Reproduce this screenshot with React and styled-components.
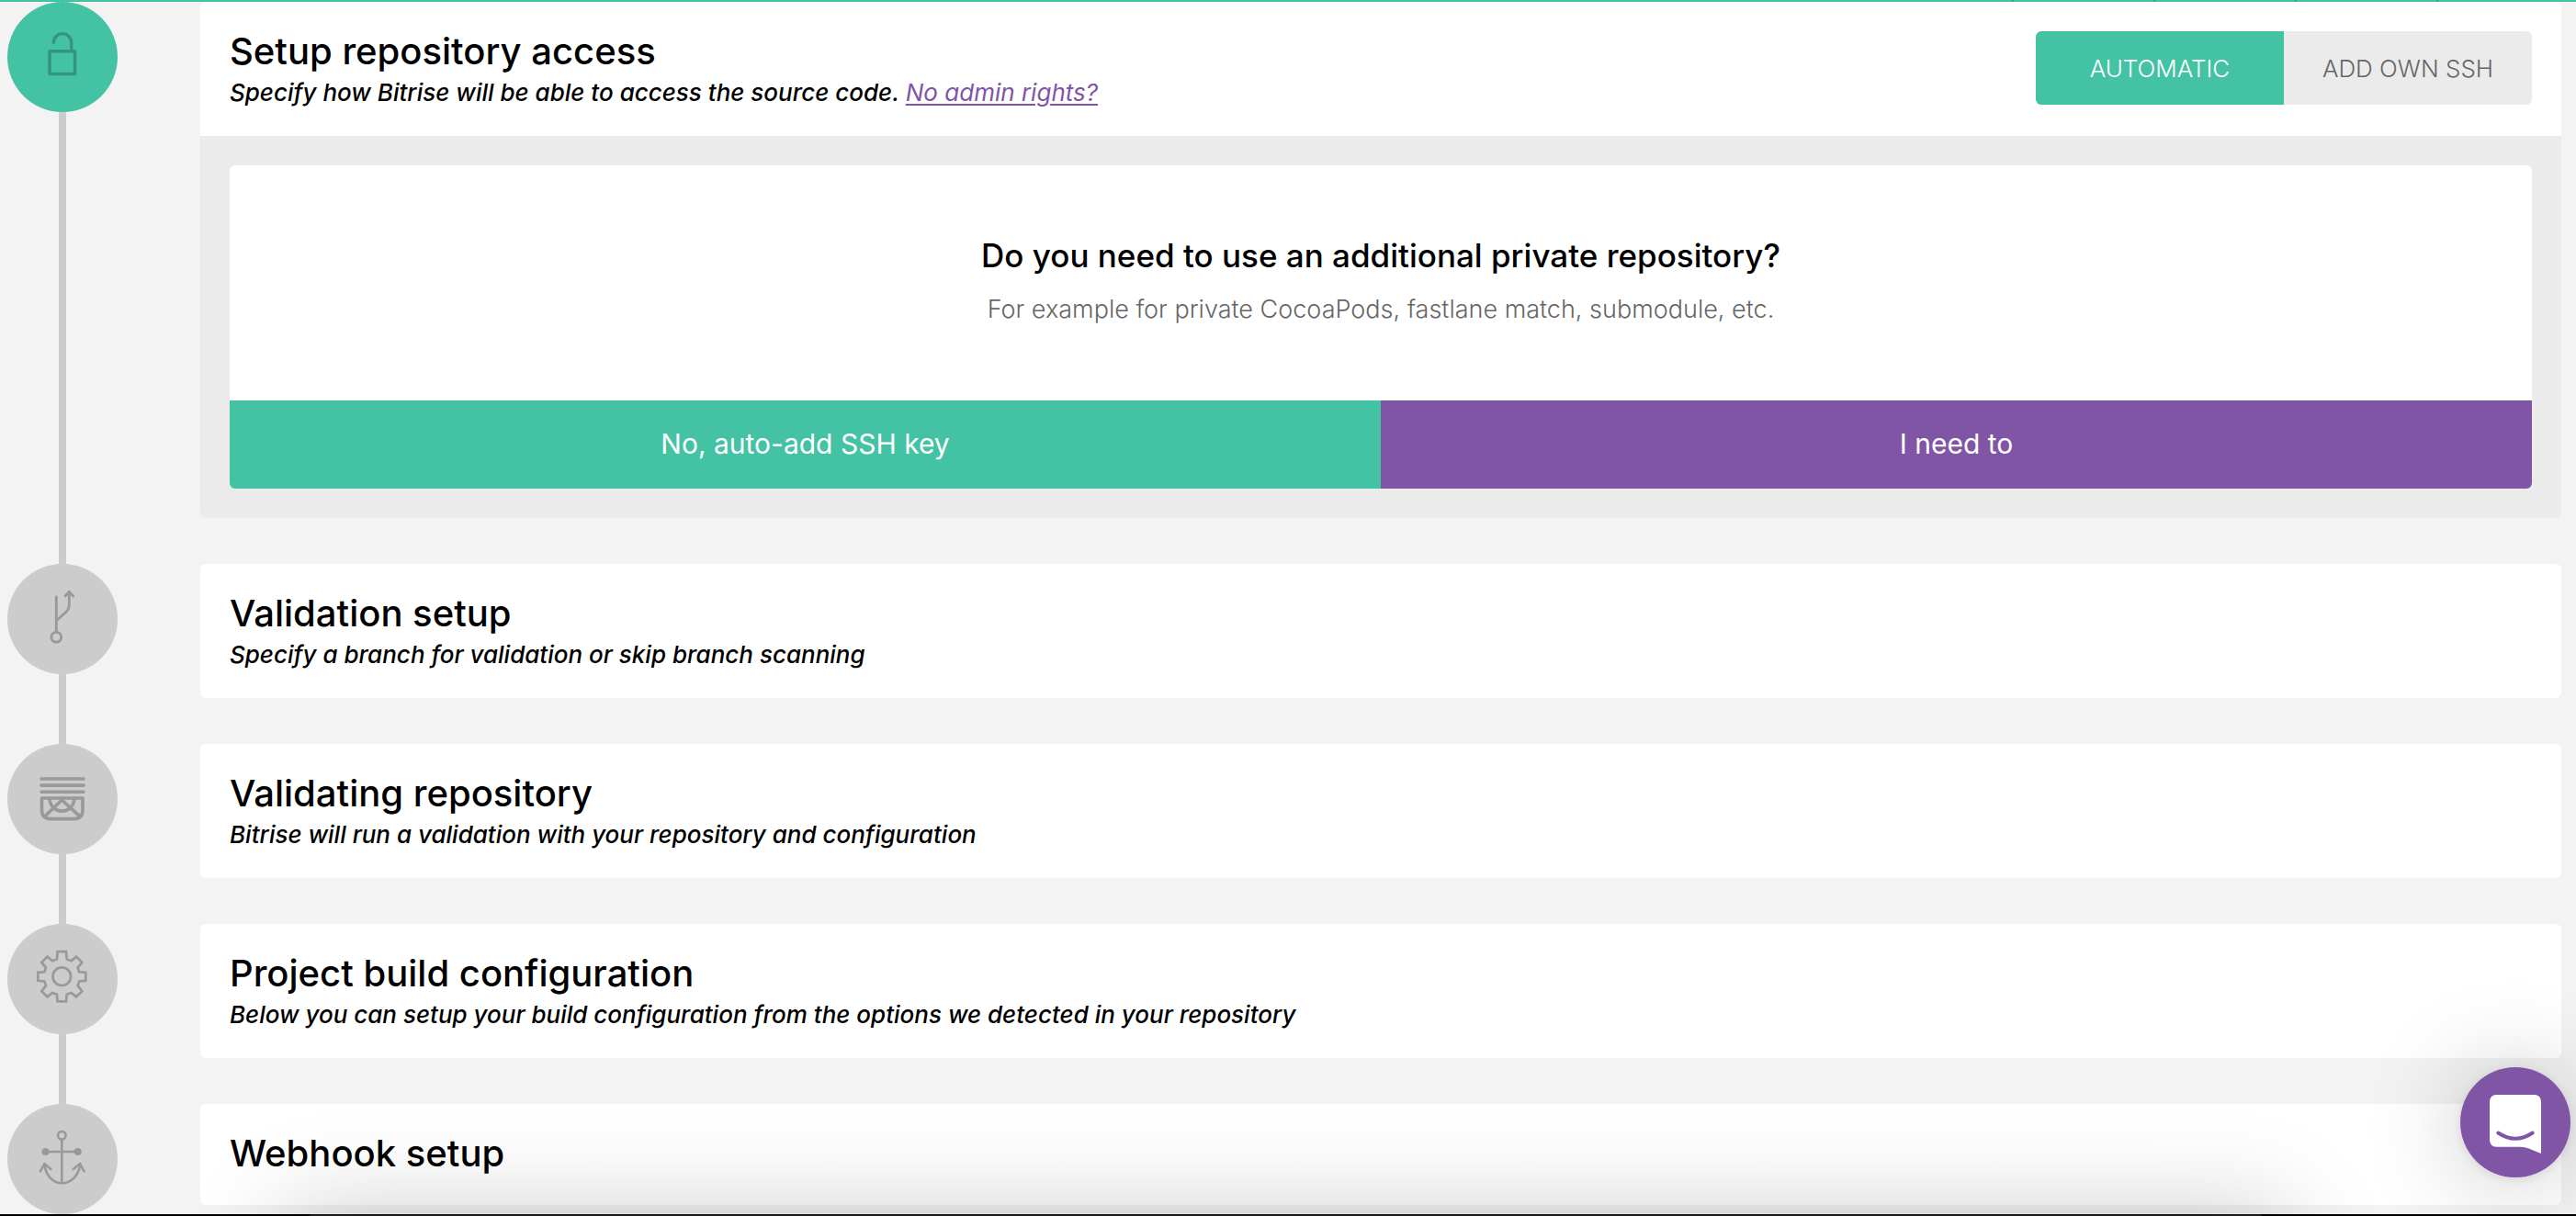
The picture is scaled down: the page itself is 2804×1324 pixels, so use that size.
import React, { useState } from "react";
import styled, { createGlobalStyle } from "styled-components";

const green = "#44c2a4";
const purple = "#8155a6";

const GlobalStyle = createGlobalStyle`
  *, *::before, *::after { box-sizing: border-box; }
  body {
    margin: 0;
    background: #f3f3f3;
    color: #000;
    font-family: Inter, "Open Sans", "Liberation Sans", sans-serif;
  }
  h2, h3, p, ol, ul { margin: 0; padding: 0; }
  button { font-family: inherit; border: 0; cursor: pointer; }
`;

const Page = styled.div`
  overflow-x: hidden;
  padding-bottom: 2px;
`;

const TopBar = styled.div`
  display: flex;
  justify-content: flex-end;
  height: 2px;
  padding-right: 150px;
  background: ${green};
`;

const TopBarCell = styled.span`
  width: 154px;
  border-right: 2px solid #3d9f87;
`;

const Steps = styled.ol`
  list-style: none;
  padding: 0 16px 0 8px;
`;

const Step = styled.li`
  display: flex;
  gap: 90px;
`;

const Rail = styled.div`
  display: flex;
  flex-direction: column;
  align-items: center;
  flex: 0 0 120px;
`;

const Marker = styled.div`
  width: 120px;
  height: 120px;
  border-radius: 50%;
  background: ${(p) => (p.$active ? green : "#cccccc")};
  color: ${(p) => (p.$active ? "#34957e" : "#999999")};
`;

const Connector = styled.div`
  flex: 1;
  width: 8px;
  background: #cccccc;
`;

const Content = styled.div`
  flex: 1;
  min-width: 0;
  padding-bottom: ${(p) => (p.$last ? 0 : 50)}px;
`;

const Card = styled.section`
  border-radius: 6px;
  overflow: hidden;
  background: #fff;
`;

const CardHeader = styled.header`
  display: flex;
  align-items: center;
  justify-content: space-between;
  gap: 32px;
  padding: 27px 32px 29px;
`;

const Title = styled.h2`
  font-size: 40px;
  line-height: 54px;
  font-weight: 500;
`;

const Subtitle = styled.p`
  font-size: 26px;
  line-height: 36px;
  font-style: italic;
  font-weight: 500;
`;

const HelpLink = styled.a`
  color: ${purple};
  font-weight: 400;
  text-decoration: underline;
  text-decoration-thickness: 2px;
  text-underline-offset: 3px;
`;

const Toggle = styled.div`
  display: flex;
  flex: 0 0 540px;
  height: 80px;
  border-radius: 6px;
  overflow: hidden;
`;

const ToggleButton = styled.button`
  flex: 1;
  font-size: 26px;
  font-weight: 300;
  background: ${(p) => (p.$selected ? green : "#ebebeb")};
  color: ${(p) => (p.$selected ? "#fff" : "#666")};
`;

const Panel = styled.div`
  padding: 32px;
  background: #ebebeb;
`;

const Question = styled.div`
  padding: 68px 32px 70px;
  border-radius: 6px 6px 0 0;
  background: #fff;
  text-align: center;
`;

const QuestionTitle = styled.h3`
  font-size: 35px;
  line-height: 60px;
  font-weight: 500;
`;

const QuestionHint = styled.p`
  font-size: 27px;
  line-height: 58px;
  font-weight: 300;
  color: #666;
`;

const Answers = styled.div`
  display: flex;
  border-radius: 0 0 6px 6px;
  overflow: hidden;
`;

const AnswerButton = styled.button`
  flex: 1;
  height: 96px;
  padding: 0 6px 2px;
  font-size: 30px;
  font-weight: 400;
  color: #fff;
  background: ${(p) => p.$color};
`;

const ChatButton = styled.button`
  position: fixed;
  right: 6px;
  bottom: 42px;
  width: 120px;
  height: 120px;
  padding: 0;
  border-radius: 50%;
  background: ${purple};
  box-shadow: 0 2px 12px rgba(0, 0, 0, 0.1), 0 4px 110px rgba(0, 0, 0, 0.24);
`;

const ScreenEdge = styled.div`
  position: fixed;
  left: 0;
  right: 0;
  bottom: 0;
  height: 2px;
  background: #000;
`;

const WindowEdge = styled.div`
  position: fixed;
  left: 333px;
  right: 338px;
  bottom: -198px;
  height: 200px;
  border-radius: 8px;
  background: #1a1a1a;
  box-shadow: 0 20px 110px 28px rgba(0, 0, 0, 0.18);
`;

const Glyph = ({ children, width = 3 }) => (
  <svg
    width="120"
    height="120"
    viewBox="0 0 120 120"
    fill="none"
    stroke="currentColor"
    strokeWidth={width}
    strokeLinecap="round"
    strokeLinejoin="round"
    aria-hidden="true"
    display="block"
  >
    {children}
  </svg>
);

const LockIcon = () => (
  <Glyph width={3.4}>
    <rect x="46" y="53.7" width="27.5" height="24.8" />
    <path d="M50.3 44.3a9.7 9.7 0 0 1 19.4 0V53" />
  </Glyph>
);

const BranchIcon = () => (
  <Glyph width={2.9}>
    <path d="M53.3 36v37.5" />
    <circle cx="53.3" cy="79.8" r="5.4" />
    <path d="M53.3 62l11.2-10.2q2.8-3 2.8-6.8V30.5" />
    <path d="M63 35l4.3-4.5L71.7 35" />
  </Glyph>
);

const ScannerIcon = () => (
  <Glyph width={3.6}>
    <path d="M37 38h46M37 45.1h46M37 52.2h46" />
    <path d="M37.5 59H82v13q0 9.600-9.600 9.600H47.1q-9.600 0-9.600-9.600z" />
    <path d="M46 59.5a13.4 13.6 0 0 0 26.8 0" />
    <path d="M41.5 78.3L59.3 61L78.3 78.3" />
  </Glyph>
);

const GearIcon = () => (
  <Glyph width={2.7}>
    <path
      strokeLinejoin="miter"
      transform="translate(59.3 57.2)"
      d="M-4.7-27H4.7L5.4-18.8L10.3-17L15.7-21.6L22-15.4L17.3-9.6L19-4.9L26-4.4V4.6L19 5.2L17.3 10L22 16L15.7 22.2L10.3 17.8L5.4 19.5L4.7 27.2H-4.7L-5.4 19.5L-10.3 17.8L-15.7 22.2L-22 16L-17.3 10L-19 5.2L-26 4.6V-4.4L-19-4.9L-17.3-9.6L-22-15.4L-15.7-21.6L-10.3-17L-5.4-18.8z"
    />
    <circle cx="59.3" cy="57.2" r="9.8" />
  </Glyph>
);

const AnchorIcon = () => (
  <Glyph width={2.6}>
    <circle cx="59.3" cy="34.3" r="4.3" />
    <path d="M59.3 39v47M41.7 52h35" />
    <circle cx="41.6" cy="52" r="2.8" fill="currentColor" />
    <circle cx="76.7" cy="52" r="2.8" fill="currentColor" />
    <path d="M40.5 65.5C41.5 78 50 86.3 59.5 86.3S78 78 79.2 65.5" />
    <path d="M35.9 73.4L40.4 65L47.3 71M71.7 71L79 65L83.5 73.4" />
  </Glyph>
);

const ChatIcon = () => (
  <Glyph width={4}>
    <path
      fill="#fff"
      stroke="none"
      d="M39 30h42a7 7 0 0 1 7 7v57L74 88.2q-4-1.5-8-1.5H39a7 7 0 0 1-7-7V37a7 7 0 0 1 7-7z"
    />
    <path stroke={purple} d="M41.3 71.5q18.7 12.5 37.4 0" />
  </Glyph>
);

function AccessSetup() {
  const [mode, setMode] = useState("automatic");
  return (
    <Card>
      <CardHeader>
        <div>
          <Title>Setup repository access</Title>
          <Subtitle>
            Specify how Bitrise will be able to access the source code.{" "}
            <HelpLink href="#admin-rights">No admin rights?</HelpLink>
          </Subtitle>
        </div>
        <Toggle role="group" aria-label="SSH key setup">
          <ToggleButton
            type="button"
            $selected={mode === "automatic"}
            aria-pressed={mode === "automatic"}
            onClick={() => setMode("automatic")}
          >
            AUTOMATIC
          </ToggleButton>
          <ToggleButton
            type="button"
            $selected={mode === "own"}
            aria-pressed={mode === "own"}
            onClick={() => setMode("own")}
          >
            ADD OWN SSH
          </ToggleButton>
        </Toggle>
      </CardHeader>
      <Panel>
        <Question>
          <QuestionTitle>Do you need to use an additional private repository?</QuestionTitle>
          <QuestionHint>For example for private CocoaPods, fastlane match, submodule, etc.</QuestionHint>
        </Question>
        <Answers>
          <AnswerButton type="button" $color={green}>No, auto-add SSH key</AnswerButton>
          <AnswerButton type="button" $color={purple}>I need to</AnswerButton>
        </Answers>
      </Panel>
    </Card>
  );
}

const pendingSteps = [
  {
    title: "Validation setup",
    text: "Specify a branch for validation or skip branch scanning",
    Icon: BranchIcon,
  },
  {
    title: "Validating repository",
    text: "Bitrise will run a validation with your repository and configuration",
    Icon: ScannerIcon,
  },
  {
    title: "Project build configuration",
    text: "Below you can setup your build configuration from the options we detected in your repository",
    Icon: GearIcon,
  },
  { title: "Webhook setup", Icon: AnchorIcon },
];

export default function App() {
  return (
    <Page>
      <GlobalStyle />
      <TopBar>
        <TopBarCell />
        <TopBarCell />
        <TopBarCell />
        <TopBarCell />
      </TopBar>
      <Steps>
        <Step>
          <Rail>
            <Marker $active>
              <LockIcon />
            </Marker>
            <Connector />
          </Rail>
          <Content>
            <AccessSetup />
          </Content>
        </Step>
        {pendingSteps.map(({ title, text, Icon }, i) => {
          const last = i === pendingSteps.length - 1;
          return (
            <Step key={title}>
              <Rail>
                <Marker>
                  <Icon />
                </Marker>
                {!last && <Connector />}
              </Rail>
              <Content $last={last}>
                <Card>
                  <CardHeader>
                    <div>
                      <Title>{title}</Title>
                      {text && <Subtitle>{text}</Subtitle>}
                    </div>
                  </CardHeader>
                </Card>
              </Content>
            </Step>
          );
        })}
      </Steps>
      <ScreenEdge />
      <WindowEdge />
      <ChatButton type="button" aria-label="Open chat">
        <ChatIcon />
      </ChatButton>
    </Page>
  );
}
